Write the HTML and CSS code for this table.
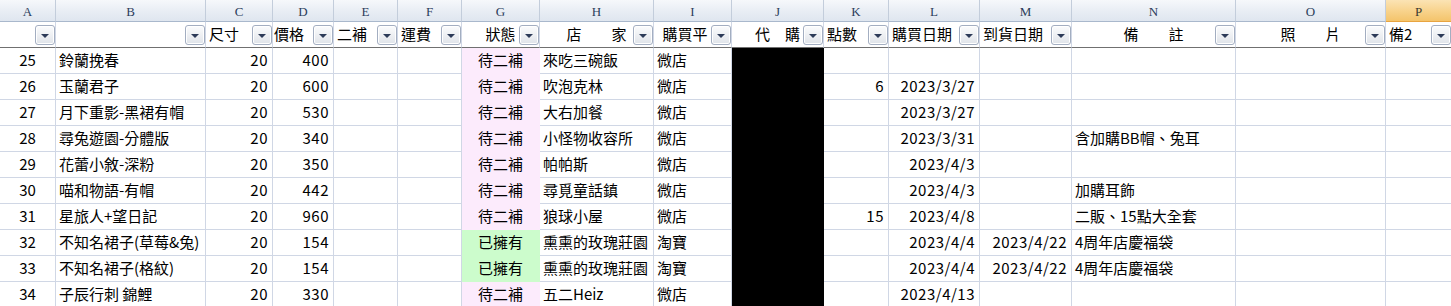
FILE: index.html
```html
<!DOCTYPE html>
<html lang="zh-Hant">
<head>
<meta charset="utf-8">
<title>Sheet</title>
<link rel="stylesheet" href="styles.css">
</head>
<body>
<div class="sheet">
  <div class="h">A</div><div class="h">B</div><div class="h">C</div><div class="h">D</div><div class="h">E</div><div class="h">F</div><div class="h">G</div><div class="h">H</div><div class="h">I</div><div class="h">J</div><div class="h">K</div><div class="h">L</div><div class="h">M</div><div class="h">N</div><div class="h">O</div><div class="h sel">P</div>

  <div class="f"><span class="dd"></span></div>
  <div class="f"><span class="dd"></span></div>
  <div class="f">尺寸<span class="dd"></span></div>
  <div class="f f-tight">價格<span class="dd"></span></div>
  <div class="f">二補<span class="dd"></span></div>
  <div class="f">運費<span class="dd"></span></div>
  <div class="f ctr">狀態<span class="dd"></span></div>
  <div class="f ctr">店　　家<span class="dd"></span></div>
  <div class="f ctr">購買平台<span class="dd"></span></div>
  <div class="f ctr">代　購<span class="dd"></span></div>
  <div class="f">點數<span class="dd"></span></div>
  <div class="f">購買日期<span class="dd"></span></div>
  <div class="f">到貨日期<span class="dd"></span></div>
  <div class="f ctr">備　　註<span class="dd"></span></div>
  <div class="f ctr">照　　片<span class="dd"></span></div>
  <div class="f">備2<span class="dd"></span></div>

  <div class="c ctr">25</div><div class="c">鈴蘭挽春</div><div class="c r">20</div><div class="c r">400</div><div class="c"></div><div class="c"></div><div class="c ctr pink">待二補</div><div class="c">來吃三碗飯</div><div class="c">微店</div><div class="c blk"></div><div class="c r"></div><div class="c r"></div><div class="c r"></div><div class="c"></div><div class="c"></div><div class="c"></div>

  <div class="c ctr">26</div><div class="c">玉蘭君子</div><div class="c r">20</div><div class="c r">600</div><div class="c"></div><div class="c"></div><div class="c ctr pink">待二補</div><div class="c">吹泡克林</div><div class="c">微店</div><div class="c blk"></div><div class="c r">6</div><div class="c r">2023/3/27</div><div class="c r"></div><div class="c"></div><div class="c"></div><div class="c"></div>

  <div class="c ctr">27</div><div class="c">月下重影-黑裙有帽</div><div class="c r">20</div><div class="c r">530</div><div class="c"></div><div class="c"></div><div class="c ctr pink">待二補</div><div class="c">大右加餐</div><div class="c">微店</div><div class="c blk"></div><div class="c r"></div><div class="c r">2023/3/27</div><div class="c r"></div><div class="c"></div><div class="c"></div><div class="c"></div>

  <div class="c ctr">28</div><div class="c">尋兔遊園-分體版</div><div class="c r">20</div><div class="c r">340</div><div class="c"></div><div class="c"></div><div class="c ctr pink">待二補</div><div class="c">小怪物收容所</div><div class="c">微店</div><div class="c blk"></div><div class="c r"></div><div class="c r">2023/3/31</div><div class="c r"></div><div class="c">含加購BB帽、兔耳</div><div class="c"></div><div class="c"></div>

  <div class="c ctr">29</div><div class="c">花蕾小敘-深粉</div><div class="c r">20</div><div class="c r">350</div><div class="c"></div><div class="c"></div><div class="c ctr pink">待二補</div><div class="c">帕帕斯</div><div class="c">微店</div><div class="c blk"></div><div class="c r"></div><div class="c r">2023/4/3</div><div class="c r"></div><div class="c"></div><div class="c"></div><div class="c"></div>

  <div class="c ctr">30</div><div class="c">喵和物語-有帽</div><div class="c r">20</div><div class="c r">442</div><div class="c"></div><div class="c"></div><div class="c ctr pink">待二補</div><div class="c">尋覓童話鎮</div><div class="c">微店</div><div class="c blk"></div><div class="c r"></div><div class="c r">2023/4/3</div><div class="c r"></div><div class="c">加購耳飾</div><div class="c"></div><div class="c"></div>

  <div class="c ctr">31</div><div class="c">星旅人+望日記</div><div class="c r">20</div><div class="c r">960</div><div class="c"></div><div class="c"></div><div class="c ctr pink">待二補</div><div class="c">狼球小屋</div><div class="c">微店</div><div class="c blk"></div><div class="c r">15</div><div class="c r">2023/4/8</div><div class="c r"></div><div class="c">二販、15點大全套</div><div class="c"></div><div class="c"></div>

  <div class="c ctr">32</div><div class="c">不知名裙子(草莓&amp;兔)</div><div class="c r">20</div><div class="c r">154</div><div class="c"></div><div class="c"></div><div class="c ctr green">已擁有</div><div class="c">熏熏的玫瑰莊園</div><div class="c">淘寶</div><div class="c blk"></div><div class="c r"></div><div class="c r">2023/4/4</div><div class="c r">2023/4/22</div><div class="c">4周年店慶福袋</div><div class="c"></div><div class="c"></div>

  <div class="c ctr">33</div><div class="c">不知名裙子(格紋)</div><div class="c r">20</div><div class="c r">154</div><div class="c"></div><div class="c"></div><div class="c ctr green">已擁有</div><div class="c">熏熏的玫瑰莊園</div><div class="c">淘寶</div><div class="c blk"></div><div class="c r"></div><div class="c r">2023/4/4</div><div class="c r">2023/4/22</div><div class="c">4周年店慶福袋</div><div class="c"></div><div class="c"></div>

  <div class="c ctr">34</div><div class="c">子辰行刺 錦鯉</div><div class="c r">20</div><div class="c r">330</div><div class="c"></div><div class="c"></div><div class="c ctr pink">待二補</div><div class="c">五二Heiz</div><div class="c">微店</div><div class="c blk"></div><div class="c r"></div><div class="c r">2023/4/13</div><div class="c r"></div><div class="c"></div><div class="c"></div><div class="c"></div>
</div>
</body>
</html>
```

FILE: styles.css
```css
* {
  box-sizing: border-box;
  margin: 0;
  padding: 0;
}

html, body {
  margin: 0;
  background: #ffffff;
  overflow: hidden;
}

body {
  font-family: "Noto Sans CJK TC", "Noto Sans", sans-serif;
  font-size: 15px;
  color: #000000;
}

.sheet {
  display: grid;
  grid-template-columns: 56px 150px 67px 61px 64px 64px 78px 114px 78px 92px 65px 91px 92px 164px 150px 66px;
  grid-template-rows: 22px 26px repeat(10, 26px);
  width: 1452px;
}

/* column letter header */
.h {
  display: flex;
  align-items: center;
  justify-content: center;
  padding-top: 2px;
  font-family: "Liberation Serif", "DejaVu Serif", serif;
  font-size: 13px;
  color: #2b3d5b;
  background: linear-gradient(#f6f8fb, #e8edf4 55%, #dfe6ef);
  border-right: 1px solid #c3cddb;
  border-bottom: 1px solid #a9b8cc;
}

.h.sel {
  background: linear-gradient(#fbe3b4, #f8d28a 55%, #f4c46b);
  border-bottom-color: #e8a440;
  border-right-color: #e8b15c;
  color: #3d3a30;
}

/* filter row */
.f {
  position: relative;
  display: flex;
  align-items: center;
  padding: 0 3px 2px;
  white-space: nowrap;
  overflow: hidden;
  line-height: 1;
  border-right: 1px solid #d0d7e5;
  border-bottom: 1px solid #707070;
}

.f.f-tight {
  padding-left: 1px;
}

.f.ctr {
  justify-content: center;
}

.dd {
  position: absolute;
  right: 0;
  top: 3px;
  width: 20px;
  height: 20px;
  border: 1px solid #a3aec1;
  border-radius: 3px;
  background: linear-gradient(#fbfcfd, #eef0f3 50%, #dfe3e9);
  box-shadow: inset 0 0 0 1px #ffffff, -3px 0 0 0 #ffffff;
}

.dd::after {
  content: "";
  position: absolute;
  left: 5px;
  top: 8px;
  border-left: 4px solid transparent;
  border-right: 4px solid transparent;
  border-top: 4px solid #2d3b58;
}

/* data cells */
.c {
  display: flex;
  align-items: center;
  padding: 0 3px 2px;
  white-space: nowrap;
  overflow: hidden;
  line-height: 1;
  border-right: 1px solid #d0d7e5;
  border-bottom: 1px solid #d0d7e5;
}

.c.r {
  justify-content: flex-end;
  padding-right: 4px;
  letter-spacing: 0.5px;
}

.c.ctr {
  justify-content: center;
}

.c.pink {
  background: #fcebfc;
  border-right-color: #fcebfc;
  border-bottom-color: #fcebfc;
}

.c.green {
  background: #ccfccc;
  border-right-color: #ccfccc;
  border-bottom-color: #ccfccc;
}

.c.blk {
  background: #000000;
  border-right-color: #000000;
  border-bottom-color: #000000;
}
```
